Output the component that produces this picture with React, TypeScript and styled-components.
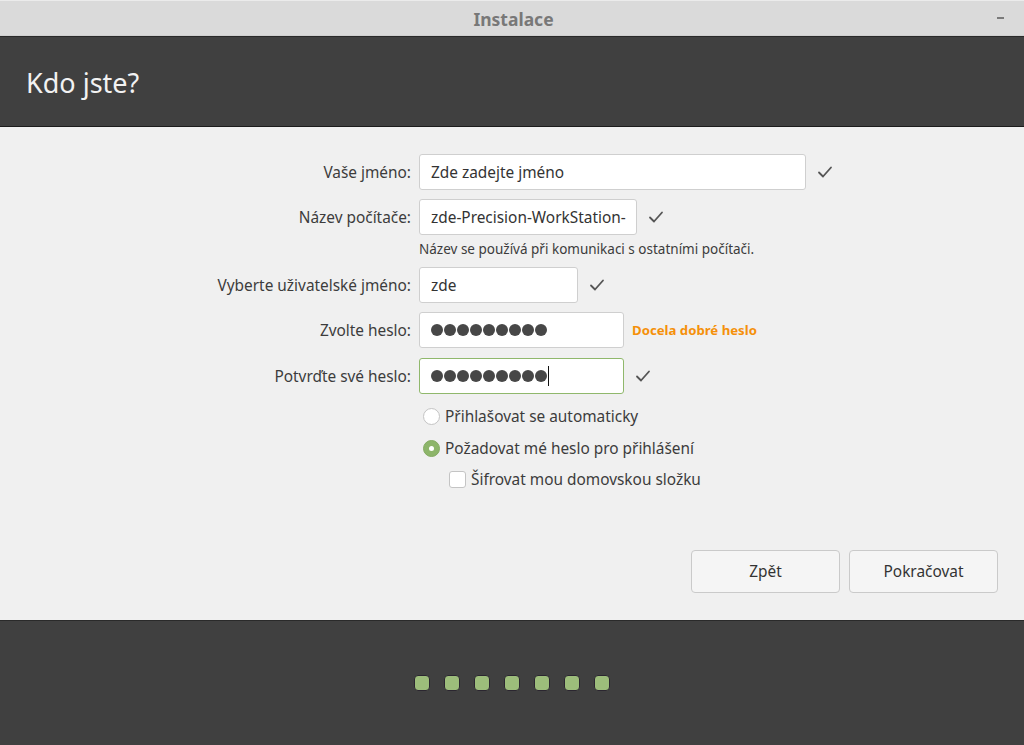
import React from "react";
import styled, { createGlobalStyle } from "styled-components";

const Global = createGlobalStyle`
  html, body { margin: 0; padding: 0; background: #404040; }
  body { font-family: "Noto Sans", "Open Sans", sans-serif; }
  #root { width: 1024px; height: 745px; }
`;

const Window = styled.div`
  width: 1024px;
  height: 745px;
  display: flex;
  flex-direction: column;
  overflow: hidden;
`;

const TitleBar = styled.div`
  height: 36px;
  flex: none;
  background: #dadada;
  border-top: 1px solid #ebebeb;
  box-sizing: border-box;
  border-bottom: 1px solid #d0d0d0;
  display: flex;
  align-items: center;
  justify-content: center;
  position: relative;
`;

const TitleText = styled.div`
  font-size: 17.5px;
  font-weight: 700;
  color: #787878;
  padding-top: 1px;
  padding-left: 3px;
`;

const Minimize = styled.div`
  position: absolute;
  right: 20px;
  top: 16px;
  width: 7px;
  height: 2px;
  background: #7a7a7a;
`;

const Rule = styled.div<{ $c: string }>`
  height: 1px;
  flex: none;
  background: ${(p) => p.$c};
`;

const Header = styled.div`
  height: 89px;
  flex: none;
  background: #404040;
  display: flex;
  align-items: center;
  padding-left: 26px;
  box-sizing: border-box;
`;

const Heading = styled.h1`
  margin: 0;
  font-size: 27px;
  font-weight: 400;
  color: #f2f2f2;
  padding-top: 2px;
`;

const Content = styled.div`
  height: 493px;
  flex: none;
  background: #f0f0f0;
  display: flex;
  flex-direction: column;
  box-sizing: border-box;
  padding-top: 27px;
  padding-bottom: 27px;
`;

const Form = styled.div`
  display: flex;
  flex-direction: column;
`;

const Row = styled.div<{ $mt?: number }>`
  display: grid;
  grid-template-columns: 411px auto auto;
  align-items: center;
  margin-top: ${(p) => p.$mt ?? 0}px;
  justify-content: start;
`;

const Label = styled.label`
  justify-self: end;
  font-size: 15.4px;
  color: #3c3c3c;
  white-space: nowrap;
`;

const Field = styled.div<{ $w: number; $focus?: boolean }>`
  width: ${(p) => p.$w}px;
  height: 36px;
  box-sizing: border-box;
  margin-left: 8px;
  background: #fff;
  border: 1px solid ${(p) => (p.$focus ? "#90b86c" : "#cfcfcf")};
  border-radius: 3px;
  display: flex;
  align-items: center;
  padding-left: 11px;
  font-size: 15.4px;
  color: #333;
  white-space: nowrap;
  overflow: hidden;
`;

const Dots = styled.div`
  display: flex;
  gap: 1px;
  align-items: center;
`;

const Dot = styled.span`
  width: 12px;
  height: 12px;
  border-radius: 50%;
  background: #474747;
`;

const Caret = styled.span`
  width: 1px;
  height: 20px;
  background: #111;
`;

const Check = styled.svg`
  margin-left: 11px;
  width: 16px;
  height: 14px;
`;

const Strength = styled.span`
  margin-left: 8px;
  font-size: 13.2px;
  font-weight: 700;
  color: #f5900a;
`;

const Hint = styled.div`
  margin: 5px 0 0 419px;
  font-size: 13.5px;
  color: #3c3c3c;
  line-height: 18px;
  white-space: nowrap;
`;

const Options = styled.div`
  display: flex;
  flex-direction: column;
  margin-top: 12px;
  padding-left: 423px;
`;

const Option = styled.div<{ $indent?: number; $mt?: number }>`
  display: flex;
  align-items: center;
  height: 20px;
  margin-left: ${(p) => p.$indent ?? 0}px;
  margin-top: ${(p) => p.$mt ?? 0}px;
  font-size: 15.4px;
  color: #3c3c3c;
  white-space: nowrap;
`;

const Radio = styled.span<{ $on?: boolean }>`
  width: 17px;
  height: 17px;
  box-sizing: border-box;
  border-radius: 50%;
  margin-right: 5px;
  background: ${(p) => (p.$on ? "#8db56a" : "#fff")};
  border: 1px solid ${(p) => (p.$on ? "#84ab62" : "#c4c4c4")};
  display: flex;
  align-items: center;
  justify-content: center;
  &::after {
    content: "";
    width: 5px;
    height: 5px;
    border-radius: 50%;
    background: #fff;
    display: ${(p) => (p.$on ? "block" : "none")};
  }
`;

const Box = styled.span`
  width: 17px;
  height: 17px;
  box-sizing: border-box;
  border-radius: 3px;
  margin-right: 5px;
  background: #fff;
  border: 1px solid #c4c4c4;
`;

const Spacer = styled.div`
  flex: 1;
`;

const Buttons = styled.div`
  display: flex;
  justify-content: flex-end;
  gap: 9px;
  padding-right: 26px;
`;

const Button = styled.button`
  width: 149px;
  height: 43px;
  box-sizing: border-box;
  background: #f5f5f5;
  border: 1px solid #cacaca;
  border-radius: 4px;
  font-family: inherit;
  font-size: 15.4px;
  color: #333;
  padding: 0 0 1px;
`;

const Footer = styled.div`
  flex: 1;
  background: #404040;
  display: flex;
  justify-content: center;
  align-items: flex-start;
  padding-top: 54px;
  box-sizing: border-box;
`;

const Steps = styled.div`
  display: flex;
  gap: 14px;
  margin-left: -1px;
`;

const Step = styled.span`
  width: 16px;
  height: 16px;
  box-sizing: border-box;
  border-radius: 4px;
  background: #9dbd7b;
  border: 1px solid #2b2630;
`;

const Tick = () => (
  <Check viewBox="0 0 16 14">
    <path d="M2 7.5 L6 11.5 L14 2.5" fill="none" stroke="#555" strokeWidth="1.8" strokeLinecap="round" strokeLinejoin="round" />
  </Check>
);

const PwDots = ({ caret }: { caret?: boolean }) => (
  <Dots>
    {Array.from({ length: 9 }).map((_, i) => (
      <Dot key={i} />
    ))}
    {caret && <Caret />}
  </Dots>
);

export default function App() {
  return (
    <Window>
      <Global />
      <TitleBar>
        <TitleText>Instalace</TitleText>
        <Minimize />
      </TitleBar>
      <Rule $c="#2a2a2a" />
      <Header>
        <Heading>Kdo jste?</Heading>
      </Header>
      <Rule $c="#1c1c1c" />
      <Content>
        <Form>
          <Row>
            <Label>Vaše jméno:</Label>
            <Field $w={387}>Zde zadejte jméno</Field>
            <Tick />
          </Row>
          <Row $mt={9}>
            <Label>Název počítače:</Label>
            <Field $w={218}>zde-Precision-WorkStation-</Field>
            <Tick />
          </Row>
          <Hint>Název se používá při komunikaci s ostatními počítači.</Hint>
          <Row $mt={9}>
            <Label>Vyberte uživatelské jméno:</Label>
            <Field $w={159}>zde</Field>
            <Tick />
          </Row>
          <Row $mt={9}>
            <Label>Zvolte heslo:</Label>
            <Field $w={205}>
              <PwDots />
            </Field>
            <Strength>Docela dobré heslo</Strength>
          </Row>
          <Row $mt={10}>
            <Label>Potvrďte své heslo:</Label>
            <Field $w={205} $focus>
              <PwDots caret />
            </Field>
            <Tick />
          </Row>
          <Options>
            <Option>
              <Radio />
              Přihlašovat se automaticky
            </Option>
            <Option $mt={12}>
              <Radio $on />
              Požadovat mé heslo pro přihlášení
            </Option>
            <Option $indent={26} $mt={11}>
              <Box />
              Šifrovat mou domovskou složku
            </Option>
          </Options>
        </Form>
        <Spacer />
        <Buttons>
          <Button>Zpět</Button>
          <Button>Pokračovat</Button>
        </Buttons>
      </Content>
      <Rule $c="#2a2a2a" />
      <Footer>
        <Steps>
          {Array.from({ length: 7 }).map((_, i) => (
            <Step key={i} />
          ))}
        </Steps>
      </Footer>
    </Window>
  );
}
